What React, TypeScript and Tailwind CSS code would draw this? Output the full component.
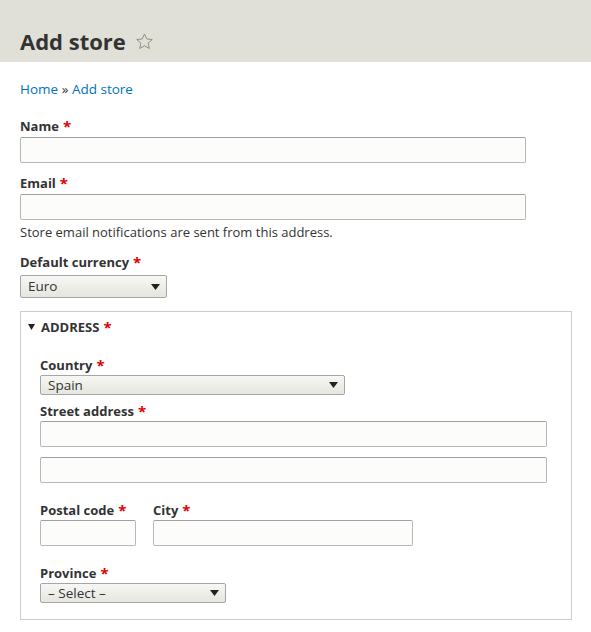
function Req() {
  return <span className="ml-1 text-[15px] leading-none text-[#e00000]">*</span>;
}

function Label({ text }: { text: string }) {
  return (
    <div className="flex h-[18px] items-center text-[13px] font-bold leading-[18px] text-[#333]">
      {text}
      <Req />
    </div>
  );
}

function TextInput({ w }: { w: string }) {
  return <div className={`${w} h-[26px] rounded-[2px] border border-[#b8b8b8] border-t-[#a0a0a0] bg-[#fcfcfa]`} />;
}

function Select({ w, h, value }: { w: string; h: string; value: string }) {
  return (
    <div
      className={`${w} ${h} flex items-center justify-between rounded-[2px] border border-[#a6a6a6] bg-gradient-to-b from-[#f7f7f4] to-[#e6e6df] pl-[7px] pr-[6px] text-[13.5px] text-[#333]`}
    >
      <span>{value}</span>
      <svg width="9" height="6" viewBox="0 0 9 6">
        <path d="M0 0h9L4.5 6z" fill="#222" />
      </svg>
    </div>
  );
}

export default function App() {
  return (
    <div className="min-h-[632px] bg-white font-['Open_Sans',sans-serif] text-[#333]">
      <header className="h-[62px] bg-[#e0e0d8] px-5 pt-[28px]">
        <h1 className="flex items-center gap-[9px] text-[22px] font-bold leading-[26px] text-[#333]">
          Add store
          <svg width="19" height="19" viewBox="0 0 24 24">
            <path
              d="M12 2.5l2.9 6.3 6.9.7-5.2 4.6 1.5 6.8L12 17.4l-6.1 3.5 1.5-6.8L2.2 9.5l6.9-.7z"
              fill="none"
              stroke="#8b8b78"
              strokeWidth="1.2"
              strokeLinejoin="round"
            />
          </svg>
        </h1>
      </header>

      <main className="px-5">
        <nav className="mt-[18px] h-[18px] text-[13.5px] leading-[18px] text-[#0074bd]">
          Home <span className="text-[#333]">»</span> Add store
        </nav>

        <div className="mt-[19px]">
          <Label text="Name" />
          <div className="mt-[2px]">
            <TextInput w="w-[506px]" />
          </div>
        </div>

        <div className="mt-[11px]">
          <Label text="Email" />
          <div className="mt-[2px]">
            <TextInput w="w-[506px]" />
          </div>
          <p className="mt-[4px] text-[13px] leading-[16px] text-[#333]">Store email notifications are sent from this address.</p>
        </div>

        <div className="mt-[13px]">
          <Label text="Default currency" />
          <div className="mt-[4px]">
            <Select w="w-[147px]" h="h-[23px]" value="Euro" />
          </div>
        </div>

        <section className="mt-[13px] h-[309px] w-[552px] border border-[#cccccc] pl-[19px]">
          <div className="-ml-[12px] mt-[6px] flex h-[18px] items-center text-[13px] font-bold uppercase leading-[18px]">
            <svg width="7" height="6" viewBox="0 0 7 6" className="mr-[6px]">
              <path d="M0 0h7L3.5 6z" fill="#222" />
            </svg>
            Address
            <Req />
          </div>

          <div className="mt-[20px]">
            <Label text="Country" />
            <div className="mt-[1px]">
              <Select w="w-[305px]" h="h-[20px]" value="Spain" />
            </div>
          </div>

          <div className="mt-[7px]">
            <Label text="Street address" />
            <div className="mt-[1px] flex flex-col gap-[10px]">
              <TextInput w="w-[507px]" />
              <TextInput w="w-[507px]" />
            </div>
          </div>

          <div className="mt-[18px] flex gap-[17px]">
            <div>
              <Label text="Postal code" />
              <div className="mt-[1px]">
                <TextInput w="w-[96px]" />
              </div>
            </div>
            <div>
              <Label text="City" />
              <div className="mt-[1px]">
                <TextInput w="w-[260px]" />
              </div>
            </div>
          </div>

          <div className="mt-[18px]">
            <Label text="Province" />
            <div className="mt-[1px]">
              <Select w="w-[186px]" h="h-[20px]" value="– Select –" />
            </div>
          </div>
        </section>
      </main>
    </div>
  );
}
